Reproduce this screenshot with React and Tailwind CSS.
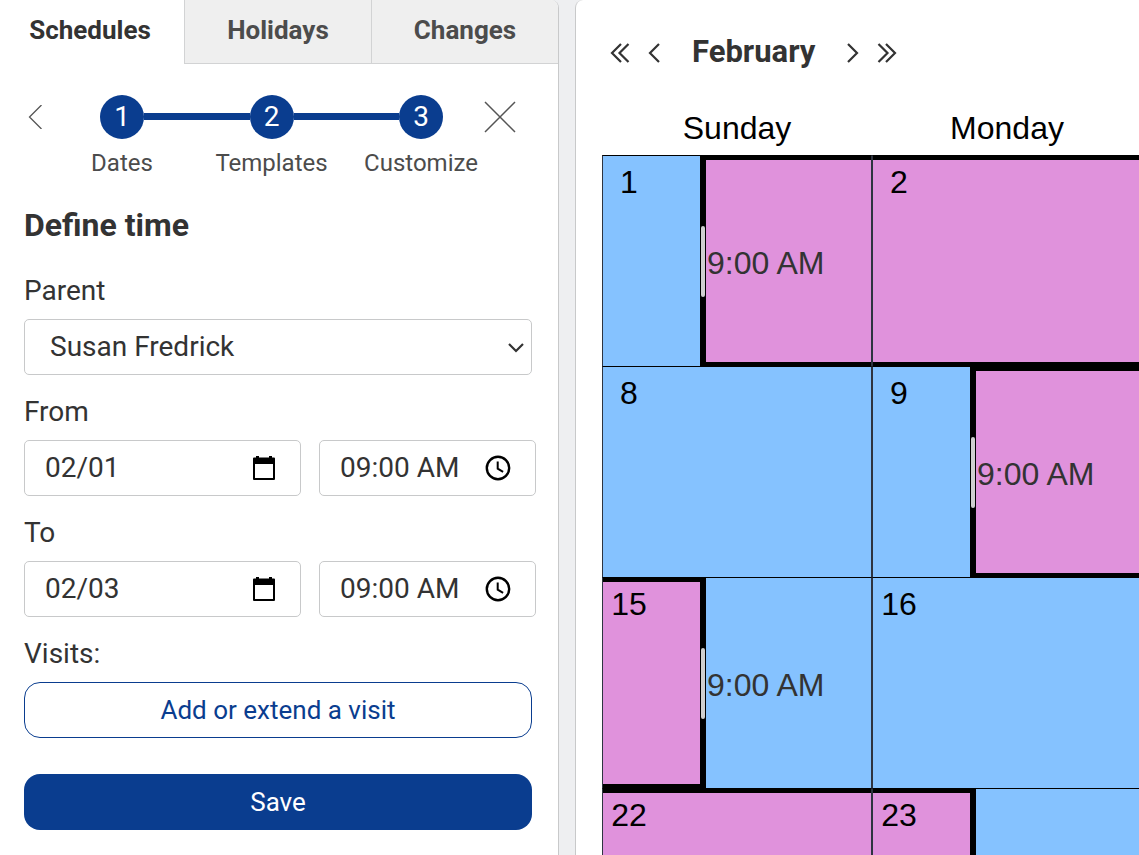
import React from 'react';

const TABS = ['Schedules', 'Holidays', 'Changes'];
const STEPS = ['Dates', 'Templates', 'Customize'];

const BLUE = 'bg-[#85c2ff]';
const PINK = 'bg-[#e092dc]';

// Each day is split into segments, the change of parent happens at 9:00 AM
const WEEKS = [
  [
    {
      day: 1,
      handle: true,
      segments: [
        { style: `${BLUE} w-[97px]` },
        { style: `${PINK} flex-1 border-l-[6px] border-y-4`, time: '9:00 AM' },
      ],
    },
    { day: 2, segments: [{ style: `${PINK} flex-1 border-y-4` }] },
  ],
  [
    { day: 8, segments: [{ style: `${BLUE} flex-1` }] },
    {
      day: 9,
      handle: true,
      segments: [
        { style: `${BLUE} w-[97px]` },
        { style: `${PINK} flex-1 border-l-[6px] border-y-4`, time: '9:00 AM' },
      ],
    },
  ],
  [
    {
      day: 15,
      handle: true,
      segments: [
        { style: `${PINK} w-[103px] border-r-[6px] border-y-4` },
        { style: `${BLUE} flex-1`, time: '9:00 AM' },
      ],
    },
    { day: 16, segments: [{ style: `${BLUE} flex-1` }] },
  ],
  [
    { day: 22, segments: [{ style: `${PINK} flex-1 border-y-4` }] },
    {
      day: 23,
      segments: [
        { style: `${PINK} w-[103px] border-r-[6px] border-y-4` },
        { style: `${BLUE} flex-1` },
      ],
    },
  ],
];

const CalendarIcon = () => (
  <svg className="w-6 h-6" viewBox="0 0 24 24" fill="none" aria-hidden="true">
    <path d="M2 1.500h20a1 1 0 0 1 1 1v20.500a1 1 0 0 1-1 1H2a1 1 0 0 1-1-1V2.500a1 1 0 0 1 1-1z" fill="#000" />
    <path d="M4 0h3v4H4zM17 0h3v4h-3z" fill="#000" />
    <path d="M3 8h18v14H3z" fill="#fff" />
  </svg>
);

const ClockIcon = () => (
  <svg className="w-[26px] h-[26px]" viewBox="0 0 26 26" fill="none" stroke="#000" aria-hidden="true">
    <circle cx="13" cy="13" r="11.2" strokeWidth="2.4" />
    <path d="M12.7 6.500v7.200l5.400 3.200" strokeWidth="2" />
  </svg>
);

const Chevrons = ({ double, right }) => (
  <svg
    className={`${double ? 'w-5' : 'w-3'} h-5 ${right ? 'rotate-180' : ''}`}
    viewBox={double ? '0 0 20 20' : '0 0 12 20'}
    fill="none"
    stroke="#333"
    strokeWidth="2.2"
    aria-hidden="true"
  >
    <path d="M11 1L2 10l9 9" />
    {double && <path d="M18.500 1L9.500 10l9 9" />}
  </svg>
);

const Tabs = () => (
  <div role="tablist" className="grid grid-cols-[184fr_187fr_187fr]">
    {TABS.map((tab, i) => (
      <button
        key={tab}
        role="tab"
        aria-selected={i === 0}
        className={`h-16 text-[26px] font-bold ${
          i === 0 ? 'pr-1 pb-1 text-[#333]' : 'pb-0.5 bg-[#efefef] text-[#4c4c4c] border-l border-b border-[#d2d3d4]'
        }`}
      >
        {tab}
      </button>
    ))}
  </div>
);

const Stepper = () => (
  <div className="flex items-start pl-7 pr-[42px] pt-[31px]">
    <button aria-label="Back" className="h-11 mr-[58px]">
      <svg className="w-3.5 h-6" viewBox="0 0 14 24" fill="none" stroke="#555" strokeWidth="1.3">
        <path d="M13.500 0L1.500 12l12 12" />
      </svg>
    </button>
    <ol className="flex flex-1">
      {STEPS.map((step, i) => (
        <li key={step} className={`flex items-start ${i < 2 ? 'flex-1' : ''}`}>
          <div className="flex flex-col items-center w-11 shrink-0">
            <span className="flex items-center justify-center w-11 h-11 rounded-full bg-[#0a3d8f] text-white text-[28px]">
              {i + 1}
            </span>
            <span className="mt-1.5 text-[24px] leading-9 whitespace-nowrap text-[#4c4c4c]">{step}</span>
          </div>
          {i < 2 && <div className="flex-1 h-[7px] mt-[18px] bg-[#0a3d8f]" />}
        </li>
      ))}
    </ol>
    <button aria-label="Close" className="h-11 ml-[41px]">
      <svg className="w-8 h-8" viewBox="0 0 32 32" fill="none" stroke="#555" strokeWidth="1.5">
        <path d="M1 1l30 30M31 1L1 31" />
      </svg>
    </button>
  </div>
);

const TextField = ({ label, value, icon }) => (
  <div className="flex items-center min-w-0 h-14 pl-5 pr-6 rounded-[5px] border border-[#c8c9ca]">
    <input
      aria-label={label}
      defaultValue={value}
      className="flex-1 min-w-0 text-[28px] text-[#333] outline-none"
    />
    <button type="button" className="shrink-0" aria-label={`Choose ${label}`}>
      {icon}
    </button>
  </div>
);

const DateTimeRow = ({ label, date, time }) => (
  <fieldset className="mt-[25px] min-w-0">
    <legend className="mb-4 text-[28px] leading-6">{label}</legend>
    <div className="grid grid-cols-[minmax(0,277fr)_minmax(0,217fr)] gap-[18px] -mr-1">
      <TextField label={`${label} date`} value={date} icon={<CalendarIcon />} />
      <TextField label={`${label} time`} value={time} icon={<ClockIcon />} />
    </div>
  </fieldset>
);

const SchedulePanel = () => (
  <section className="bg-white border-r border-[#c8c9ca] rounded-tr-lg overflow-hidden text-[#333]">
    <Tabs />
    <Stepper />
    <form className="pl-6 pr-[26px] pt-[26px]" onSubmit={(e) => e.preventDefault()}>
      <h2 className="text-[32px] leading-9 font-bold">Define time</h2>
      <label htmlFor="parent" className="block mt-9 mb-4 text-[28px] leading-6">
        Parent
      </label>
      <div className="relative">
        <select
          id="parent"
          className="w-full h-14 pl-[25px] appearance-none rounded-[5px] border border-[#c8c9ca] text-[28px]"
        >
          <option>Susan Fredrick</option>
        </select>
        <svg
          className="absolute right-2 top-6 w-4 h-2.5 pointer-events-none"
          viewBox="0 0 16 10"
          fill="none"
          stroke="#333"
          strokeWidth="2.2"
        >
          <path d="M1 1l7 7 7-7" />
        </svg>
      </div>

      <DateTimeRow label="From" date="02/01" time="09:00 AM" />
      <DateTimeRow label="To" date="02/03" time="09:00 AM" />

      <p className="mt-[25px] mb-4 text-[28px] leading-6">Visits:</p>
      <button
        type="button"
        className="w-full h-14 rounded-2xl border border-[#0a3d8f] text-[#0a3d8f] text-[26px]"
      >
        Add or extend a visit
      </button>
      <button type="submit" className="w-full h-14 mt-9 rounded-2xl bg-[#0a3d8f] text-white text-[26px]">
        Save
      </button>
    </form>
  </section>
);

const DayCell = ({ day, segments, handle }) => (
  <td className="p-0 border-t border-x border-t-black border-x-[#2e3440]">
    <div className="relative flex h-[210px]">
      {segments.map((segment, i) => (
        <div key={i} className={`flex items-center border-black ${segment.style}`}>
          {segment.time && (
            <span className="pt-1 pl-px text-[32px] leading-9 whitespace-nowrap text-[#333]">{segment.time}</span>
          )}
        </div>
      ))}
      <span className="absolute left-2 top-2 w-9 text-center text-[32px] leading-9 text-black">{day}</span>
      {handle && <div className="absolute left-[98px] top-[70px] w-1 h-[71px] rounded-full bg-[#cfcfcf]" />}
    </div>
  </td>
);

const CalendarPanel = () => (
  <section className="bg-white border-l border-[#c8c9ca] rounded-tl-lg overflow-hidden pl-[26px]">
    <div className="flex items-center h-[105px] pl-2 text-[#333]">
      <button aria-label="Previous year">
        <Chevrons double />
      </button>
      <button aria-label="Previous month" className="ml-[18px]">
        <Chevrons />
      </button>
      <h2 className="mx-8 text-[31px] font-bold">February</h2>
      <button aria-label="Next month">
        <Chevrons right />
      </button>
      <button aria-label="Next year" className="ml-[18px]">
        <Chevrons double right />
      </button>
    </div>
    <table className="w-[540px] min-w-full table-fixed border-separate border-spacing-0 font-['Liberation_Sans',sans-serif]">
      <thead>
        <tr>
          {['Sunday', 'Monday'].map((name) => (
            <th key={name} className="h-[50px] p-0 pb-1 text-[32px] leading-9 font-normal text-black">
              {name}
            </th>
          ))}
        </tr>
      </thead>
      <tbody>
        {WEEKS.map((week, i) => (
          <tr key={i}>
            {week.map((cell) => (
              <DayCell key={cell.day} {...cell} />
            ))}
          </tr>
        ))}
      </tbody>
    </table>
  </section>
);

export default function App() {
  return (
    <main className="grid grid-cols-[minmax(0,559fr)_minmax(0,564fr)] gap-4 h-screen overflow-hidden bg-[#eeeff1] font-[Roboto,sans-serif]">
      <SchedulePanel />
      <CalendarPanel />
    </main>
  );
}
